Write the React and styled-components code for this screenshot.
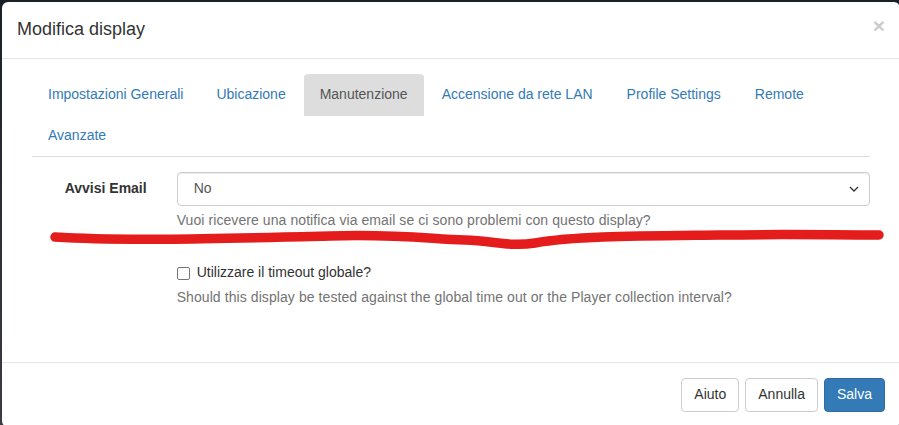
import React from "react";
import styled, { createGlobalStyle } from "styled-components";

const GlobalStyle = createGlobalStyle`
  html, body {
    margin: 0;
    padding: 0;
    background: #262a31;
    overflow: hidden;
  }
  * {
    box-sizing: border-box;
  }
`;

const Backdrop = styled.div`
  position: relative;
  width: 899px;
  height: 425px;
  padding: 2px 0 0 2px;
  background: linear-gradient(#1b1f27, #3b3d42);
  font-family: "Liberation Sans", Arial, sans-serif;
  font-size: 14px;
  line-height: 1.42857;
  color: #333;
  overflow: hidden;
`;

const Modal = styled.div`
  width: 898px;
  background: #fff;
  border-radius: 6px;
`;

const Header = styled.div`
  display: flex;
  align-items: flex-start;
  justify-content: space-between;
  padding: 15px;
  border-bottom: 1px solid #e5e5e5;
`;

const Title = styled.h4`
  margin: 0;
  font-size: 18px;
  font-weight: 500;
  line-height: 1.42857;
  color: #333;
`;

const Close = styled.span`
  font-size: 21px;
  font-weight: bold;
  line-height: 1;
  color: #000;
  opacity: 0.2;
  margin-top: -2px;
`;

const Body = styled.div`
  padding: 15px 30px 29px 30px;
`;

const Tabs = styled.ul`
  display: flex;
  flex-wrap: wrap;
  margin: 0;
  padding: 0;
  list-style: none;
  border-bottom: 1px solid #ddd;
`;

// tab text in the reference renders a touch wider, so the active one gets pulled back
const Tab = styled.li`
  margin-bottom: -1px;
  margin-right: 2px;
  padding: 10px 15px;
  border: 1px solid transparent;
  border-radius: 4px 4px 0 0;
  color: ${(p) => (p.$active ? "#555" : "#337ab7")};
  background: ${(p) => (p.$active ? "#ddd" : "transparent")};
  white-space: nowrap;
  &:nth-child(2) {
    margin-left: -1px;
  }
`;

const TabContent = styled.div`
  padding-top: 15px;
`;

const FormGroup = styled.div`
  display: grid;
  grid-template-columns: 16.6667% 83.3333%;
  margin: 0 -15px 15px;
`;

const Label = styled.label`
  padding: 7px 15px 0;
  text-align: right;
  font-weight: bold;
`;

const Field = styled.div`
  grid-column: 2;
  padding: 0 15px;
`;

const Select = styled.div`
  display: flex;
  align-items: center;
  justify-content: space-between;
  height: 34px;
  padding: 6px 10px 6px 16px;
  border: 1px solid #ccc;
  border-radius: 4px;
  box-shadow: inset 0 1px 1px rgba(0, 0, 0, 0.075);
  color: #555;
`;

const Help = styled.p`
  margin: 5px 0 10px;
  color: #737373;
  letter-spacing: 0.08px;
`;

const CheckRow = styled.label`
  display: flex;
  align-items: flex-start;
  padding-top: 7px;
  gap: 7px;
`;

const Box = styled.span`
  width: 13px;
  height: 13px;
  margin-top: 4px;
  border: 1.5px solid #767676;
  border-radius: 2px;
  background: #fff;
`;

const Footer = styled.div`
  display: flex;
  justify-content: flex-end;
  gap: 6px;
  padding: 15px;
  border-top: 1px solid #e5e5e5;
`;

const Button = styled.button`
  height: 34px;
  padding: 6px 12px;
  font-family: inherit;
  font-size: 14px;
  line-height: 1.42857;
  border-radius: 4px;
  border: 1px solid ${(p) => (p.$primary ? "#2e6da4" : "#ccc")};
  background: ${(p) => (p.$primary ? "#337ab7" : "#fff")};
  color: ${(p) => (p.$primary ? "#fff" : "#333")};
`;

const Scribble = styled.svg`
  position: absolute;
  left: 0;
  top: 0;
  pointer-events: none;
`;

const tabs = [
  "Impostazioni Generali",
  "Ubicazione",
  "Manutenzione",
  "Accensione da rete LAN",
  "Profile Settings",
  "Remote",
  "Avanzate",
];

const App = () => (
  <Backdrop>
    <GlobalStyle />
    <Modal>
      <Header>
        <Title>Modifica display</Title>
        <Close>×</Close>
      </Header>
      <Body>
        <Tabs>
          {tabs.map((t) => (
            <Tab key={t} $active={t === "Manutenzione"}>
              {t}
            </Tab>
          ))}
        </Tabs>
        <TabContent>
          <FormGroup>
            <Label>Avvisi Email</Label>
            <Field>
              <Select>
                <span>No</span>
                <svg width="10" height="6" viewBox="0 0 10 6">
                  <path d="M1 1l4 4 4-4" fill="none" stroke="#333" strokeWidth="1.3" />
                </svg>
              </Select>
              <Help>Vuoi ricevere una notifica via email se ci sono problemi con questo display?</Help>
            </Field>
          </FormGroup>
          <FormGroup>
            <Field>
              <CheckRow>
                <Box />
                Utilizzare il timeout globale?
              </CheckRow>
              <Help>
                Should this display be tested against the global time out or the Player collection interval?
              </Help>
            </Field>
          </FormGroup>
        </TabContent>
      </Body>
      <Footer>
        <Button>Aiuto</Button>
        <Button>Annulla</Button>
        <Button $primary>Salva</Button>
      </Footer>
    </Modal>
    <Scribble width="899" height="425">
      <path
        d="M55 237 C 120 241, 200 239, 330 236 C 400 234, 430 239, 465 240 C 495 241, 510 247, 535 243 C 575 236, 640 236, 720 235 C 790 234, 830 235, 879 235"
        fill="none"
        stroke="#e41c1c"
        strokeWidth="9.5"
        strokeLinecap="round"
      />
    </Scribble>
  </Backdrop>
);

export default App;
